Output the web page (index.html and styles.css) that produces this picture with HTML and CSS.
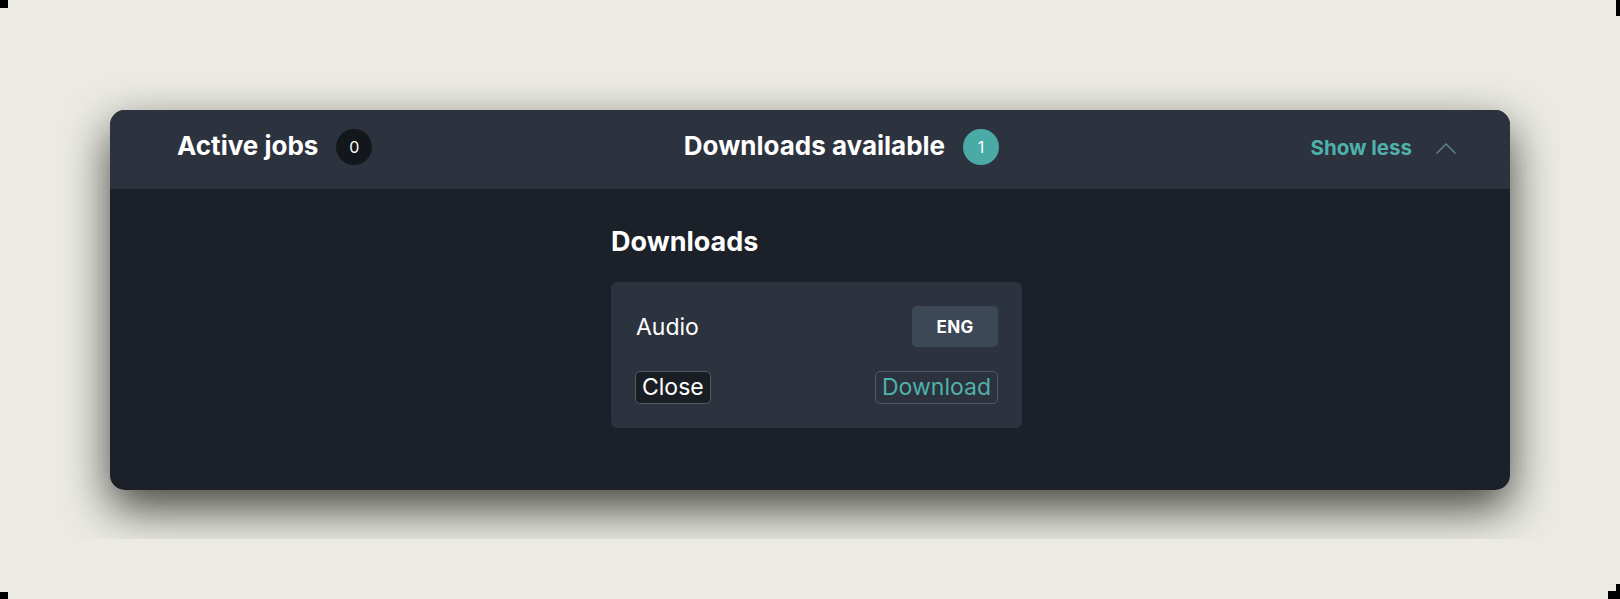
FILE: index.html
```html
<!DOCTYPE html>
<html lang="en">
<head>
<meta charset="utf-8">
<title>Downloads</title>
<link rel="stylesheet" href="styles.css">
</head>
<body>
<div class="stage">
  <section class="panel">
    <header class="panel-head">
      <div class="group">
        <span class="title">Active jobs</span>
        <span class="badge badge-dark">0</span>
      </div>
      <div class="group">
        <span class="title">Downloads available</span>
        <span class="badge badge-teal">1</span>
      </div>
      <button class="toggle" type="button">
        <span class="toggle-text">Show less</span>
        <svg class="chev" width="20" height="11" viewBox="0 0 20 11" aria-hidden="true"><polyline points="0.5,10.5 10,1 19.5,10.5" fill="none" stroke="#5b8b8c" stroke-width="1.3"/></svg>
      </button>
    </header>
    <div class="panel-body">
      <div class="col">
        <h2 class="heading">Downloads</h2>
        <div class="dl-card">
          <div class="row">
            <span class="label">Audio</span>
            <button class="lang" type="button">ENG</button>
          </div>
          <div class="row row-actions">
            <button class="btn btn-close" type="button">Close</button>
            <button class="btn btn-dl" type="button">Download</button>
          </div>
        </div>
      </div>
    </div>
  </section>
</div>
<span class="mark mark-tl"></span>
<span class="mark mark-tr"></span>
<span class="mark mark-bl"></span>
<span class="mark mark-br1"></span>
<span class="mark mark-br2"></span>
</body>
</html>
```

FILE: styles.css
```css
html, body {
  margin: 0;
  padding: 0;
  background: #ebebe4;
}
body {
  width: 1620px;
  height: 599px;
  overflow: hidden;
  position: relative;
  font-family: Inter, "Noto Sans", "Liberation Sans", sans-serif;
  color: #ffffff;
}
.stage {
  width: 1560px;
  height: 539px;
  overflow: hidden;
  box-sizing: border-box;
  padding: 110px 50px 0 110px;
  background: #ebebe4;
}
.panel {
  width: 1400px;
  border-radius: 15px;
  overflow: hidden;
  background: #1c2028;
  box-shadow: 0 18px 46px rgba(8, 8, 4, 0.74);
}
.panel-head {
  height: 79px;
  box-sizing: border-box;
  background: #2d333e;
  display: flex;
  align-items: center;
  justify-content: space-between;
  padding: 0 54px 8px 67px;
}
.group {
  display: flex;
  align-items: center;
  gap: 18px;
}
.title {
  font-size: 26px;
  font-weight: 700;
  line-height: 32px;
}
.badge {
  width: 36px;
  height: 36px;
  border-radius: 50%;
  display: flex;
  align-items: center;
  justify-content: center;
  font-size: 16px;
  font-weight: 400;
  margin-top: 3px;
}
.badge-dark { background: #13171b; }
.badge-teal { background: #4aaba6; }
.toggle {
  background: none;
  border: 0;
  padding: 0;
  margin-top: 4px;
  display: flex;
  align-items: center;
  gap: 24px;
  font-family: inherit;
  cursor: pointer;
}
.toggle-text {
  color: #4fb1aa;
  font-size: 20.5px;
  font-weight: 700;
  line-height: 24px;
}
.chev { display: block; margin-top: 2px; }
.panel-body {
  display: flex;
  justify-content: center;
  padding: 37px 0 62px 13px;
}
.col { width: 411px; }
.heading {
  margin: 0 0 24px;
  font-size: 27px;
  font-weight: 700;
  line-height: 32px;
}
.dl-card {
  background: #2d333e;
  border-radius: 6px;
  padding: 24px;
}
.row {
  display: flex;
  align-items: center;
  justify-content: space-between;
}
.row-actions { margin-top: 24px; }
.label {
  font-size: 23px;
  line-height: 30px;
  margin-left: 1px;
}
.lang {
  width: 86px;
  height: 41px;
  border: 0;
  border-radius: 5px;
  background: #3c4855;
  color: #ffffff;
  font-family: inherit;
  font-size: 17px;
  font-weight: 700;
  letter-spacing: 0.3px;
  padding: 0;
}
.btn {
  font-family: inherit;
  font-size: 23px;
  line-height: 31px;
  padding: 0 6px;
  border: 1px solid #555a60;
  border-radius: 5px;
}
.btn-close {
  background: #1a1e24;
  color: #ffffff;
}
.btn-dl {
  background: transparent;
  color: #4fb1aa;
}
.mark {
  position: absolute;
  background: #000;
}
.mark-tl { left: 0; top: 0; width: 8px; height: 8px; }
.mark-tr { right: 0; top: 0; width: 4px; height: 16px; }
.mark-bl { left: 0; bottom: 0; width: 8px; height: 7px; }
.mark-br1 { right: 0; bottom: 0; width: 4px; height: 15px; }
.mark-br2 { right: 0; bottom: 0; width: 12px; height: 8px; }
```
